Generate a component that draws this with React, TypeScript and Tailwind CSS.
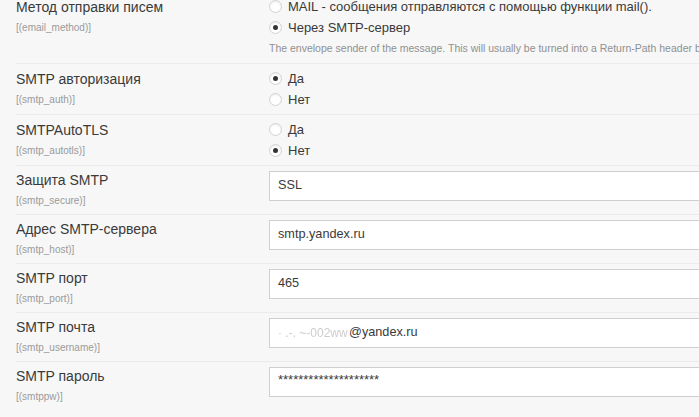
type Opt = { label: string; checked?: boolean };

type Row =
  | { kind: 'radio'; label: string; code: string; options: Opt[]; help?: string }
  | { kind: 'input'; label: string; code: string; value: string; small?: boolean; masked?: boolean };

const rows: Row[] = [
  {
    kind: 'radio',
    label: 'Метод отправки писем',
    code: '[(email_method)]',
    options: [
      { label: 'MAIL - сообщения отправляются с помощью функции mail().' },
      { label: 'Через SMTP-сервер', checked: true },
    ],
    help: 'The envelope sender of the message. This will usually be turned into a Return-Path header by the receiver',
  },
  {
    kind: 'radio',
    label: 'SMTP авторизация',
    code: '[(smtp_auth)]',
    options: [{ label: 'Да', checked: true }, { label: 'Нет' }],
  },
  {
    kind: 'radio',
    label: 'SMTPAutoTLS',
    code: '[(smtp_autotls)]',
    options: [{ label: 'Да' }, { label: 'Нет', checked: true }],
  },
  { kind: 'input', label: 'Защита SMTP', code: '[(smtp_secure)]', value: 'SSL' },
  { kind: 'input', label: 'Адрес SMTP-сервера', code: '[(smtp_host)]', value: 'smtp.yandex.ru' },
  { kind: 'input', label: 'SMTP порт', code: '[(smtp_port)]', value: '465' },
  { kind: 'input', label: 'SMTP почта', code: '[(smtp_username)]', value: '@yandex.ru', masked: true },
  { kind: 'input', label: 'SMTP пароль', code: '[(smtppw)]', value: '********************', small: true },
];

function Radio({ checked }: { checked?: boolean }) {
  return (
    <span className="w-[13px] h-[13px] rounded-full border border-[#d2d2d2] bg-white shadow-[inset_0_1px_2px_rgba(0,0,0,0.08)] flex items-center justify-center shrink-0">
      {checked && <span className="w-[5px] h-[5px] rounded-full bg-[#333]" />}
    </span>
  );
}

function Label({ label, code }: { label: string; code: string }) {
  return (
    <div className="w-[253px] shrink-0">
      <div className="text-[14px] leading-[20px] text-[#3a3a3a]">{label}</div>
      <div className="mt-[3px] text-[10px] leading-[16px] text-[#9a9a9a]">{code}</div>
    </div>
  );
}

export default function App() {
  return (
    <div
      className="w-[699px] h-[417px] overflow-hidden bg-[#f7f7f7]"
      style={{ fontFamily: '"Liberation Sans", Arial, sans-serif' }}
    >
      <div className="mt-[-9px] w-[800px] pl-4">
        {rows.map((r) =>
          r.kind === 'radio' ? (
            <div key={r.code} className="flex border-t border-[#ebebeb] pt-[5px] pb-[4px]">
              <Label label={r.label} code={r.code} />
              <div className="flex-1 min-w-0 -mt-[1px]">
                {r.options.map((o) => (
                  <div key={o.label} className="flex items-center gap-[6px] h-[21px] text-[13px] text-[#3a3a3a] whitespace-nowrap">
                    <Radio checked={o.checked} />
                    <span>{o.label}</span>
                  </div>
                ))}
                {r.help && (
                  <div className="mt-[3px] mb-[4px] text-[10.5px] leading-[14px] text-[#909090] whitespace-nowrap">
                    {r.help}
                  </div>
                )}
              </div>
            </div>
          ) : (
            <div key={r.code} className="flex items-start h-[49px] border-t border-[#ebebeb] pt-[5px]">
              <div className="-mt-[1px]">
                <Label label={r.label} code={r.code} />
              </div>
              <div className="flex-1 h-[30px] bg-white border border-[#cfcfcf] flex items-center px-2 text-[#3a3a3a] whitespace-nowrap">
                {r.masked && (
                  <span className="text-[12px] text-[#cdcdcd] blur-[0.7px] w-[71px] shrink-0 overflow-hidden">
                    {'\u00b7 .-.  ~-002ww  \u0131'}
                  </span>
                )}
                <span className={r.small ? 'text-[13px] leading-[13px] self-start mt-[5px]' : 'text-[12.7px]'}>
                  {r.value}
                </span>
              </div>
            </div>
          ),
        )}
      </div>
    </div>
  );
}
